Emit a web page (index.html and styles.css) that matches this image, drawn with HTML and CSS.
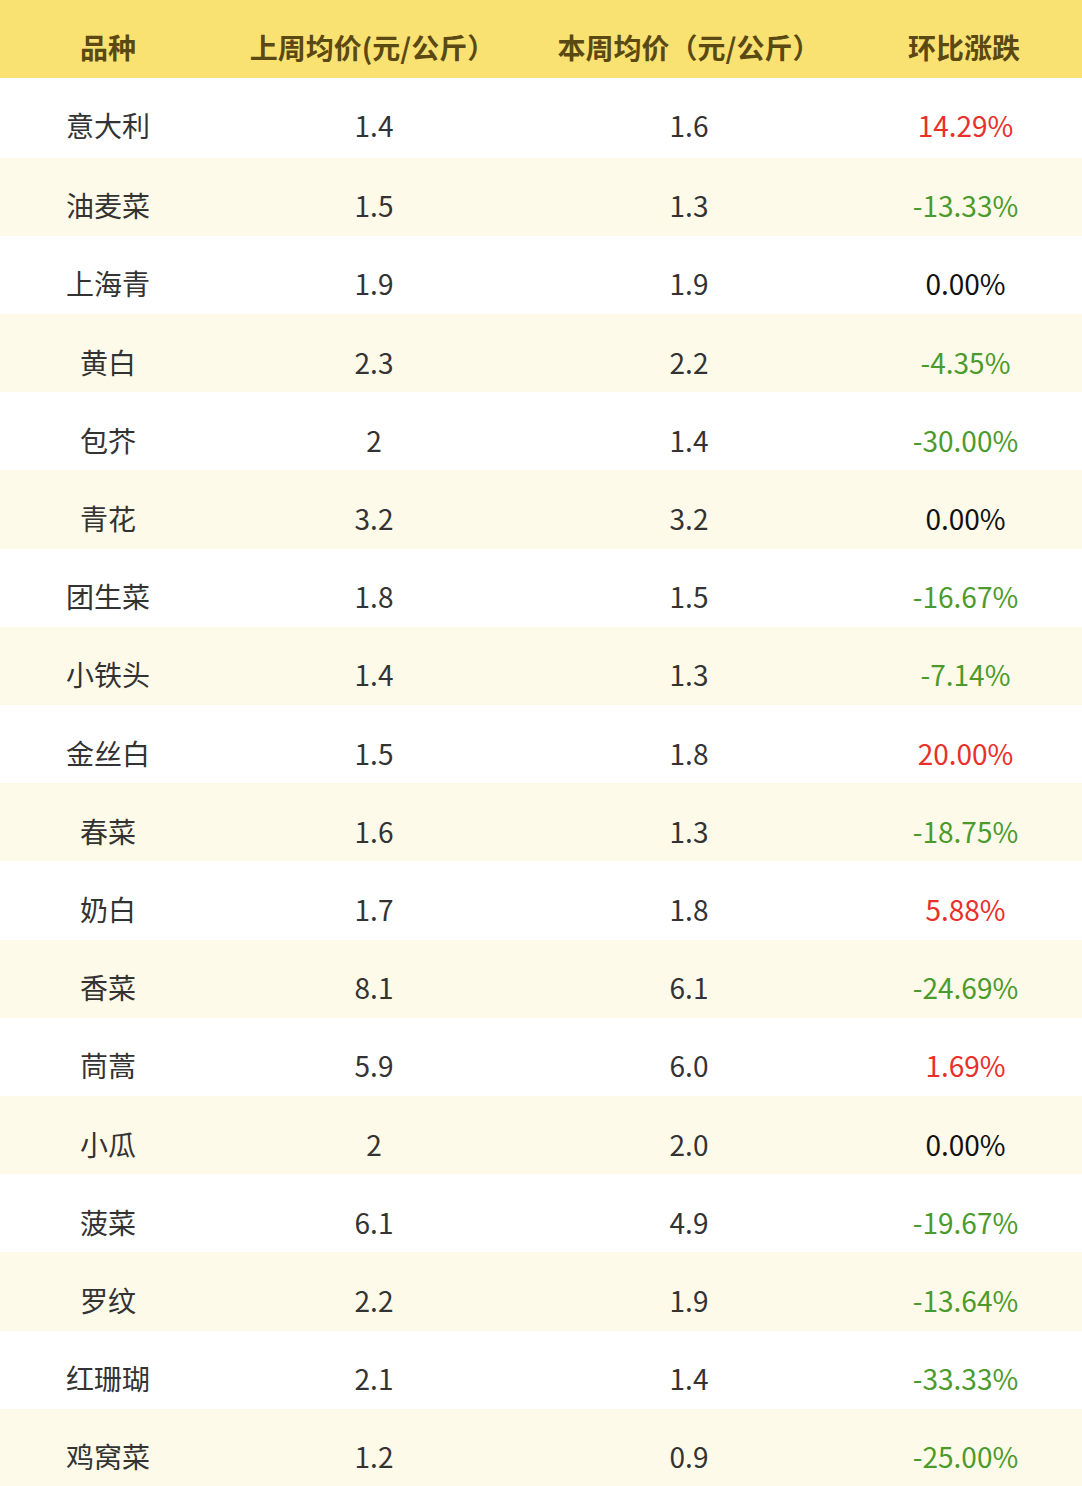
FILE: index.html
```html
<!DOCTYPE html>
<html lang="zh-CN">
<head>
<meta charset="utf-8">
<title>蔬菜价格</title>
<link rel="stylesheet" href="styles.css">
</head>
<body>
<div class="table">
  <div class="row head">
    <div class="cell">品种</div>
    <div class="cell">上周均价(元/公斤）</div>
    <div class="cell">本周均价（元/公斤）</div>
    <div class="cell">环比涨跌</div>
  </div>
  <div class="row first"><div class="cell">意大利</div><div class="cell">1.4</div><div class="cell">1.6</div><div class="cell up">14.29%</div></div>
  <div class="row alt"><div class="cell">油麦菜</div><div class="cell">1.5</div><div class="cell">1.3</div><div class="cell down">-13.33%</div></div>
  <div class="row"><div class="cell">上海青</div><div class="cell">1.9</div><div class="cell">1.9</div><div class="cell flat">0.00%</div></div>
  <div class="row alt"><div class="cell">黄白</div><div class="cell">2.3</div><div class="cell">2.2</div><div class="cell down">-4.35%</div></div>
  <div class="row"><div class="cell">包芥</div><div class="cell">2</div><div class="cell">1.4</div><div class="cell down">-30.00%</div></div>
  <div class="row alt"><div class="cell">青花</div><div class="cell">3.2</div><div class="cell">3.2</div><div class="cell flat">0.00%</div></div>
  <div class="row"><div class="cell">团生菜</div><div class="cell">1.8</div><div class="cell">1.5</div><div class="cell down">-16.67%</div></div>
  <div class="row alt"><div class="cell">小铁头</div><div class="cell">1.4</div><div class="cell">1.3</div><div class="cell down">-7.14%</div></div>
  <div class="row"><div class="cell">金丝白</div><div class="cell">1.5</div><div class="cell">1.8</div><div class="cell up">20.00%</div></div>
  <div class="row alt"><div class="cell">春菜</div><div class="cell">1.6</div><div class="cell">1.3</div><div class="cell down">-18.75%</div></div>
  <div class="row"><div class="cell">奶白</div><div class="cell">1.7</div><div class="cell">1.8</div><div class="cell up">5.88%</div></div>
  <div class="row alt"><div class="cell">香菜</div><div class="cell">8.1</div><div class="cell">6.1</div><div class="cell down">-24.69%</div></div>
  <div class="row"><div class="cell">茼蒿</div><div class="cell">5.9</div><div class="cell">6.0</div><div class="cell up">1.69%</div></div>
  <div class="row alt"><div class="cell">小瓜</div><div class="cell">2</div><div class="cell">2.0</div><div class="cell flat">0.00%</div></div>
  <div class="row"><div class="cell">菠菜</div><div class="cell">6.1</div><div class="cell">4.9</div><div class="cell down">-19.67%</div></div>
  <div class="row alt"><div class="cell">罗纹</div><div class="cell">2.2</div><div class="cell">1.9</div><div class="cell down">-13.64%</div></div>
  <div class="row"><div class="cell">红珊瑚</div><div class="cell">2.1</div><div class="cell">1.4</div><div class="cell down">-33.33%</div></div>
  <div class="row alt"><div class="cell">鸡窝菜</div><div class="cell">1.2</div><div class="cell">0.9</div><div class="cell down">-25.00%</div></div>
</div>
</body>
</html>
```
FILE: styles.css
```css
html, body {
  margin: 0;
  padding: 0;
  background: #ffffff;
}
body {
  font-family: "Noto Sans CJK SC", "Noto Sans", sans-serif;
  font-size: 28px;
  color: #333333;
}
.table {
  width: 1082px;
  display: flex;
  flex-direction: column;
}
.row {
  display: grid;
  grid-template-columns: 216px 316px 314px 236px;
  height: 78.2px;
  flex: none;
  background: #ffffff;
}
.row.first {
  height: 80px;
}
.row.alt {
  background: #fefaea;
}
.row.head {
  height: 77.7px;
  background: #f9e272;
  color: #5a4912;
  font-weight: 700;
}
.cell {
  display: flex;
  align-items: center;
  justify-content: center;
  padding-top: 17px;
  box-sizing: border-box;
  white-space: nowrap;
  line-height: 1;
}
.row.first > .cell {
  padding-top: 15px;
}
.row > .cell:nth-child(4) {
  padding-left: 3px;
}
.row.head > .cell:nth-child(4) {
  padding-left: 0;
}
.row.head > .cell:nth-child(2) {
  padding-right: 3px;
}
.up { color: #e8302a; }
.down { color: #4b9b2c; }
.flat { color: #111111; }
```
